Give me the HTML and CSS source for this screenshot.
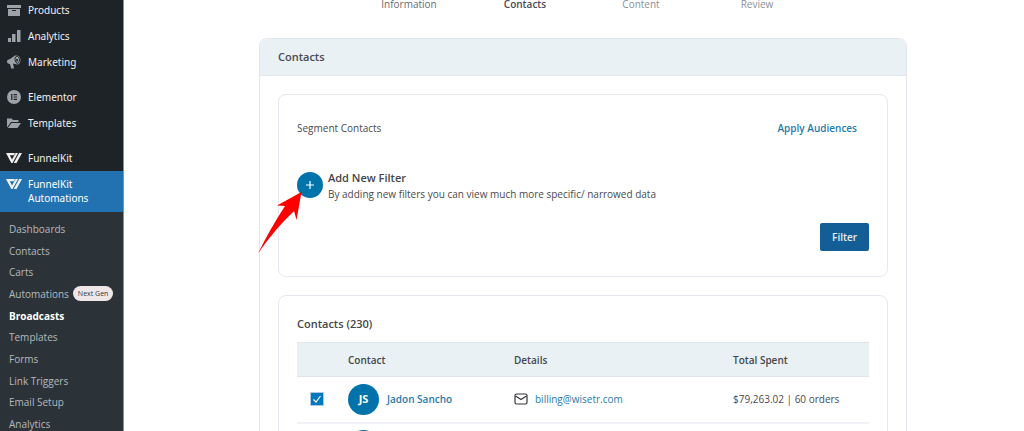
FILE: index.html
```html
<!DOCTYPE html>
<html lang="en">
<head>
<meta charset="utf-8">
<title>Broadcasts – Contacts</title>
<link rel="stylesheet" href="styles.css">
</head>
<body>
<svg class="defs" width="0" height="0" aria-hidden="true">
  <symbol id="kit" viewBox="0 0 16 12">
    <path d="M0 1h9L7.800 3.300H3.800L6 7.500 9.600 1H12L6.500 11H5.300Z"/>
    <path d="M13.200 1H16L10.500 11H7.800Z"/>
  </symbol>
</svg>
<div class="layout">
  <nav class="sidebar" aria-label="Admin menu">
    <ul class="menu">
      <li><a class="item" href="#"><svg class="icon" viewBox="0 0 14 14"><path d="M0 2h14v3H0zM1 6h12v7H1z"/><path class="cut" d="M5 7h4v1H5z"/></svg>Products</a></li>
      <li><a class="item" href="#"><svg class="icon" viewBox="0 0 14 14"><path d="M1 9h3v4H1zM5 5h3.500v8H5zM10 1h3.500v12H10z"/></svg>Analytics</a></li>
      <li><a class="item" href="#"><svg class="icon" viewBox="0 0 14 14"><path d="M0 6.500C0 5 1 4.500 3 4L8 .6C11 0 13.500 2 13.500 5S12 9.500 10 9.500L6 8.600 7 13.500H4.200L3 9C1 9 0 8 0 6.500Z"/><path class="ring" d="M8.500 2c2-1.500 4 .5 4 2.800s-1 3.700-2.300 3.600C8.500 8 7.300 4 8.500 2ZM9 4.500h1.500v1.500H9"/></svg>Marketing</a></li>
      <li class="split"><a class="item" href="#"><svg class="icon" viewBox="0 0 14 14"><circle cx="7" cy="7" r="7"/><path class="cut" d="M4.200 4h1.200v6H4.200zM6.600 4H10v1.200H6.600zM6.600 6.400H10v1.200H6.600zM6.600 8.800H10V10H6.600z"/></svg>Elementor</a></li>
      <li><a class="item" href="#"><svg class="icon" viewBox="0 0 14 14"><path d="M0 2.500h4.500L6 4h5.500v2H4L0 11.500ZM4.500 7H14l-3.500 5H.8Z"/></svg>Templates</a></li>
      <li class="split"><a class="item" href="#"><svg class="icon kit"><use href="#kit"/></svg>FunnelKit</a></li>
      <li><a class="item active" href="#" aria-current="true"><svg class="icon kit"><use href="#kit"/></svg>FunnelKit<br>Automations</a></li>
    </ul>
    <ul class="submenu">
      <li><a href="#">Dashboards</a></li>
      <li><a href="#">Contacts</a></li>
      <li><a href="#">Carts</a></li>
      <li><a href="#">Automations <span class="badge">Next Gen</span></a></li>
      <li><a class="current" href="#" aria-current="page">Broadcasts</a></li>
      <li><a href="#">Templates</a></li>
      <li><a href="#">Forms</a></li>
      <li><a href="#">Link Triggers</a></li>
      <li><a href="#">Email Setup</a></li>
      <li><a href="#">Analytics</a></li>
    </ul>
  </nav>

  <main class="main">
    <ol class="steps">
      <li class="done">Information</li>
      <li class="now" aria-current="step">Contacts</li>
      <li>Content</li>
      <li>Review</li>
    </ol>

    <section class="card">
      <h1 class="card-title">Contacts</h1>
      <div class="card-body">
        <section class="panel filters">
          <div class="segment">
            <span>Segment Contacts</span>
            <a class="apply" href="#">Apply Audiences</a>
          </div>
          <div class="add">
            <button class="plus" type="button" aria-label="Add new filter"><svg viewBox="0 0 10 10"><path d="M5 1v8M1 5h8"/></svg></button>
            <div>
              <h2 class="heading">Add New Filter</h2>
              <p class="hint">By adding new filters you can view much more specific/ narrowed data</p>
            </div>
            <svg class="pointer" viewBox="0 0 44 62" aria-hidden="true"><path d="M43.500 0 38.500 28 36 19Q16 38 0 61.500 12 37 27 14L19 13.500Z"/></svg>
          </div>
          <div class="actions"><button class="filter" type="button">Filter</button></div>
        </section>

        <section class="panel list">
          <h2 class="heading">Contacts (230)</h2>
          <table class="table">
            <colgroup><col class="c-check"><col class="c-name"><col class="c-details"><col></colgroup>
            <thead>
              <tr><td></td><th scope="col">Contact</th><th scope="col">Details</th><th scope="col">Total Spent</th></tr>
            </thead>
            <tbody>
              <tr>
                <td class="pick"><input class="check" type="checkbox" checked aria-label="Select Jadon Sancho"></td>
                <td><div class="person"><span class="avatar">JS</span><a class="name" href="#">Jadon Sancho</a></div></td>
                <td><div class="mail"><svg viewBox="0 0 14 12"><rect x="1" y="1" width="12" height="10" rx="1.500"/><path d="M1.500 3 7 6.500 12.500 3"/></svg><a href="#">billing@wisetr.com</a></div></td>
                <td>$79,263.02 | 60 orders</td>
              </tr>
              <tr>
                <td></td>
                <td><div class="person"><span class="avatar"></span></div></td>
                <td></td>
                <td></td>
              </tr>
            </tbody>
          </table>
        </section>
      </div>
    </section>
  </main>
</div>
</body>
</html>
```
FILE: styles.css
```css
* { box-sizing: border-box; }
body {
  margin: 0;
  height: 100vh;
  overflow: hidden;
  background: #fff;
  color: #4a4a4f;
  font: 10px/14px "Open Sans", "Noto Sans", sans-serif;
}
ul, ol { list-style: none; margin: 0; padding: 0; }
h1, h2, p { margin: 0; }
a { color: #1f7cad; text-decoration: none; }
button { font: inherit; border: 0; padding: 0; cursor: pointer; }
.defs { position: absolute; }
.layout { display: flex; height: 100%; }

.sidebar {
  flex: 0 0 124px;
  min-height: 100%;
  background: #2c3338;
  border-right: 1px solid #8c8f94;
}
.menu { background: #1d2327; font-family: "Noto Sans", "Open Sans", sans-serif; }
.item {
  display: block;
  position: relative;
  padding: 6px 4px 6px 28px;
  color: #f0f0f1;
}
.menu li:first-child .item { padding-top: 3px; }
.split { padding-top: 9px; }
.icon {
  position: absolute;
  left: 7px;
  bottom: 6px;
  width: 14px;
  height: 14px;
  fill: #9ca2a7;
}
.cut { fill: #1d2327; }
.ring { fill: none; stroke: #1d2327; }
.icon.kit { left: 6px; top: 7px; width: 16px; height: 12px; fill: #f0f0f1; }
.item.active { padding-bottom: 7px; background: #2271b1; color: #fff; }
.submenu {
  display: grid;
  grid-auto-rows: 1fr;
  align-items: center;
  height: 217px;
  margin-top: 6px;
}
.submenu a { display: flex; align-items: center; gap: 4px; padding-left: 9px; color: #b4b9be; }
.submenu .current { color: #fff; font-weight: 700; }
.badge {
  padding: 0 5px;
  border-radius: 8px;
  background: #efe7e7;
  color: #33333d;
  font-size: 7px;
  line-height: 15px;
  white-space: nowrap;
}

.main { flex: 1; padding: 0 16px 0 34px; overflow: hidden; }
.steps {
  display: grid;
  grid-template-columns: repeat(4, 116px);
  justify-content: center;
  line-height: 8px;
  text-align: center;
  color: #8c8f99;
}
.steps .done { color: #6b6b70; }
.steps .now { color: #4a4a4f; font-weight: 600; }

.card {
  max-width: 648px;
  margin: 30px auto 0;
  border: 1px solid #e3e5ef;
  border-radius: 8px;
}
.card-title {
  padding: 10px 18px;
  border-bottom: 1px solid #e3e5ef;
  border-radius: 8px 8px 0 0;
  background: #e9f1f5;
  font-size: 11px;
  font-weight: 600;
  line-height: 16px;
}
.card-body { display: grid; gap: 18px; padding: 18px; }
.panel { padding: 18px; border: 1px solid #e6e7f0; border-radius: 8px; }
.filters { padding: 26px 18px 25px; }
.segment { display: flex; justify-content: space-between; padding-right: 12px; }
.apply { font-weight: 600; }
.heading { font-size: 11px; font-weight: 600; line-height: 20px; color: #45454a; }
.add { position: relative; display: flex; gap: 5px; margin-top: 34px; }
.plus {
  display: grid;
  place-items: center;
  width: 26px;
  height: 26px;
  margin-top: 3px;
  border-radius: 50%;
  background: #0073aa;
}
.plus svg { width: 10px; height: 10px; stroke: #fff; stroke-width: 1.2; }
.add .heading { line-height: 18px; }
.pointer { position: absolute; left: -39px; top: 23px; width: 44px; height: 62px; fill: #fe0000; }
.actions { display: flex; justify-content: flex-end; margin-top: 22px; }
.filter {
  padding: 7px 12px;
  border-radius: 2px;
  background: #135e96;
  color: #e8eef4;
  font-weight: 600;
}

.table {
  width: 100%;
  margin-top: 8px;
  border-collapse: collapse;
  table-layout: fixed;
}
.c-check { width: 51px; }
.c-name { width: 166px; }
.c-details { width: 219px; }
.table th, .table td { padding: 0; text-align: left; }
.table thead { background: #e9f1f5; }
.table thead tr { height: 34px; border: solid #e0e4ec; border-width: 1px 0; }
.table th { font-weight: 600; color: #45454a; }
.table tbody tr { height: 46px; border-bottom: 2px solid #f0f0f6; }
.check {
  display: block;
  appearance: none;
  width: 14px;
  height: 14px;
  margin: 0 0 0 13px;
  border: 1px solid #b4c9dc;
  background: #0078bd url("data:image/svg+xml,%3Csvg xmlns='http://www.w3.org/2000/svg' viewBox='0 0 12 12'%3E%3Cpath d='M2.500 6.500 5 9 9.500 3' fill='none' stroke='white' stroke-width='1.200'/%3E%3C/svg%3E");
}
.person { display: flex; align-items: center; gap: 8px; }
.avatar {
  display: grid;
  place-items: center;
  width: 31px;
  height: 31px;
  border-radius: 50%;
  background: #0073aa;
  color: #fff;
  font-size: 11px;
  font-weight: 700;
}
.name { font-weight: 600; }
.mail { display: flex; align-items: center; gap: 7px; }
.mail svg { width: 14px; height: 12px; fill: none; stroke: #35353a; stroke-width: 1.2; }
```
